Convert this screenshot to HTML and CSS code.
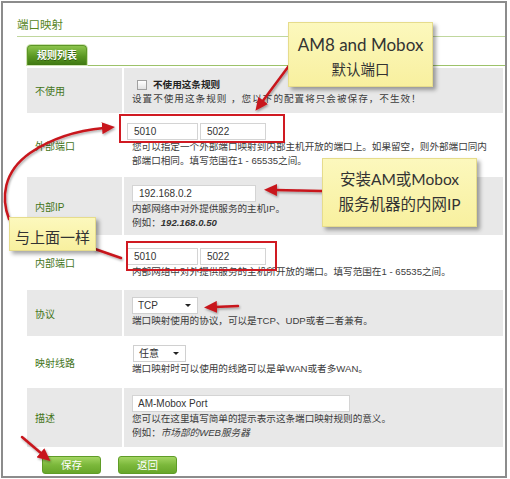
FILE: index.html
```html
<!DOCTYPE html>
<html lang="zh-CN">

<head>
    <meta charset="UTF-8">
    <meta name="viewport" content="width=device-width, initial-scale=1.0">
    <title>端口映射</title>
    <link rel="stylesheet" href="styles.css">
</head>

<body>
    <div class="page">
        <div class="frame">
            <h1 class="page-title">端口映射</h1>

            <div class="tabs">
                <span class="tab">规则列表</span>
            </div>

            <div class="rules">
                <div class="row shade row-enable">
                    <div class="label">不使用</div>
                    <div class="field">
                        <div class="check-line"><span class="check"></span><b>不使用这条规则</b></div>
                        <div class="help wide">设置不使用这条规则 ，您以下的配置将只会被保存，不生效！</div>
                    </div>
                </div>

                <div class="row row-ext">
                    <div class="label">外部端口</div>
                    <div class="field">
                        <div class="ports">
                            <input class="text port-from" type="text" value="5010">
                            <input class="text port-to" type="text" value="5022">
                        </div>
                        <div class="help">您可以指定一个外部端口映射到内部主机开放的端口上。如果留空，则外部端口同内<br>部端口相同。填写范围在1 - 65535之间。</div>
                    </div>
                </div>

                <div class="row shade row-ip">
                    <div class="label">内部IP</div>
                    <div class="field">
                        <input class="text ip" type="text" value="192.168.0.2">
                        <div class="help">内部网络中对外提供服务的主机IP。<br>例如：<b><i>192.168.0.50</i></b></div>
                    </div>
                </div>

                <div class="row row-int">
                    <div class="label">内部端口</div>
                    <div class="field">
                        <div class="ports">
                            <input class="text port-from" type="text" value="5010">
                            <input class="text port-to" type="text" value="5022">
                        </div>
                        <div class="help">内部网络中对外提供服务的主机所开放的端口。填写范围在1 - 65535之间。</div>
                    </div>
                </div>

                <div class="row shade row-proto">
                    <div class="label">协议</div>
                    <div class="field">
                        <span class="select proto">TCP<i class="caret"></i></span>
                        <div class="help">端口映射使用的协议，可以是TCP、UDP或者二者兼有。</div>
                    </div>
                </div>

                <div class="row row-line">
                    <div class="label">映射线路</div>
                    <div class="field">
                        <span class="select line">任意<i class="caret"></i></span>
                        <div class="help">端口映射时可以使用的线路可以是单WAN或者多WAN。</div>
                    </div>
                </div>

                <div class="row shade row-desc">
                    <div class="label">描述</div>
                    <div class="field">
                        <input class="text desc" type="text" value="AM-Mobox Port">
                        <div class="help">您可以在这里填写简单的提示表示这条端口映射规则的意义。<br>例如：<i>市场部的WEB服务器</i></div>
                    </div>
                </div>
            </div>

            <div class="actions">
                <button class="btn">保存</button>
                <button class="btn">返回</button>
            </div>
        </div>

        <!-- annotations drawn over the form -->
        <div class="mark mark-ext"></div>
        <div class="mark mark-int"></div>

        <svg class="arrows" width="510" height="479" viewBox="0 0 510 479">
            <defs>
                <marker id="head" markerUnits="userSpaceOnUse" markerWidth="14" markerHeight="12" refX="2" refY="6" orient="auto">
                    <path d="M0,0 L13,6 L0,12 z" fill="#c8161e" />
                </marker>
                <filter id="shade" x="-20%" y="-20%" width="140%" height="140%">
                    <feDropShadow dx="1" dy="1.5" stdDeviation="0.8" flood-color="#000" flood-opacity="0.35" />
                </filter>
            </defs>
            <g fill="none" stroke="#c8161e" stroke-width="2.5" stroke-linecap="round" filter="url(#shade)">
                <path d="M291 63 L262 102" marker-end="url(#head)" />
                <path d="M9 219 C1 198, 3 172, 30 153 C55 136, 82 130, 104 128" marker-end="url(#head)" />
                <path d="M95 249 L121 258" />
                <path d="M322 191 L275 190" marker-end="url(#head)" />
                <path d="M238 306 L215 307" marker-end="url(#head)" />
                <path d="M22 437 L42 454" marker-end="url(#head)" />
            </g>
        </svg>

        <div class="note note-ports">
            <div class="en">AM8 and Mobox</div>
            <div class="zh">默认端口</div>
        </div>
        <div class="note note-ip">
            <div>安装AM或Mobox</div>
            <div>服务机器的内网IP</div>
        </div>
        <div class="note note-same">与上面一样</div>
    </div>
</body>

</html>
```

FILE: styles.css
```css
body {
    margin: 0;
    font-family: 'Liberation Sans', 'Noto Sans CJK SC', sans-serif;
    color: #3c3c3c;
    background-color: #fff;
}

.page {
    position: relative;
    width: 510px;
    height: 479px;
    overflow: hidden;
}

.frame {
    margin: 1px;
    width: 502px;
    height: 473px;
    border: 2px solid #8c8c8c;
}

.page-title {
    margin: 0 0 0 14px;
    padding: 15px 0 4px;
    font-size: 11.5px;
    line-height: 14px;
    font-weight: normal;
    color: #57861f;
    border-bottom: 1px solid #c0d79d;
}

.tabs {
    display: flex;
    margin: 8px 0 0 24px;
    border-bottom: 1px solid #9dc26a;
}

.tab {
    width: 58px;
    height: 19px;
    line-height: 20px;
    text-align: center;
    font-size: 10px;
    font-weight: bold;
    color: #fff;
    border: 1px solid #5c9626;
    border-bottom: none;
    border-radius: 4px 4px 0 0;
    background: linear-gradient(#8cc44c, #5a9722 55%, #3f7812);
    box-shadow: 0 0 0 1px #cfe3b3;
    text-shadow: 0 1px 0 #2f5c0c;
}

.rules {
    display: flex;
    flex-direction: column;
    gap: 2px;
    margin: 2px 2px 0 24px;
}

.row {
    display: grid;
    grid-template-columns: 95px 1fr;
    column-gap: 2px;
}

.row.shade .label,
.row.shade .field {
    background-color: #e8e8e8;
}

.row-enable { height: 45px; }
.row-ext { height: 60px; }
.row-ip { height: 58px; }
.row-int { height: 51px; }
.row-proto { height: 46px; }
.row-line { height: 48px; }
.row-desc { height: 59px; }

.label {
    display: flex;
    align-items: center;
    padding-left: 8px;
    font-size: 10px;
    color: #44751a;
}

.field {
    padding: 8px 0 0 8px;
    font-size: 9.6px;
    line-height: 14px;
    white-space: nowrap;
}

.row-enable .field { padding-top: 10px; }
.row-int .field { padding-top: 11px; }
.row-proto .field,
.row-line .field,
.row-desc .field { padding-top: 7px; }

.check-line {
    display: flex;
    align-items: center;
}

.check-line b {
    color: #222;
}

.check {
    width: 8px;
    height: 8px;
    margin: 0 6px 0 5px;
    border: 1px solid #a0a0a0;
    background: linear-gradient(#fff, #e2e2e2);
}

.ports {
    display: flex;
    gap: 2px;
    margin-left: -5px;
}

.text {
    display: block;
    box-sizing: border-box;
    height: 17px;
    margin: 0;
    padding: 0 6px;
    border: 1px solid #d4d4d4;
    background-color: #fff;
    font-family: 'Liberation Sans', 'Noto Sans CJK SC', sans-serif;
    font-size: 10px;
    color: #333;
    outline: none;
}

.port-from { width: 71px; }
.port-to { width: 66px; }
.ip { width: 124px; }
.desc { width: 218px; padding-left: 5px; }

.select {
    display: flex;
    align-items: center;
    justify-content: space-between;
    box-sizing: border-box;
    height: 17px;
    padding: 0 6px 0 5px;
    border: 1px solid #d0d0d0;
    background-color: #fff;
    font-size: 10px;
    color: #333;
}

.select.proto { width: 66px; }
.select.line { width: 53px; margin-left: 1px; }

.caret {
    width: 0;
    height: 0;
    border-left: 3px solid transparent;
    border-right: 3px solid transparent;
    border-top: 3px solid #222;
}

.help {
    color: #3c3c3c;
}

.help.wide {
    letter-spacing: 1px;
}

.help b i {
    color: #333;
}

.actions {
    display: flex;
    gap: 17px;
    margin: 9px 0 0 39px;
}

.btn {
    width: 59px;
    height: 18px;
    padding: 0;
    border: 1px solid #5f9c27;
    border-radius: 3px;
    background: linear-gradient(#a3d562, #7bb83b 50%, #67a62a);
    color: #fff;
    font-family: 'Noto Sans CJK SC', sans-serif;
    font-size: 10.5px;
    line-height: 16px;
}

/* annotation layer */
.mark {
    position: absolute;
    box-sizing: border-box;
    border: 2px solid #d01a22;
}

.mark-ext {
    left: 119px;
    top: 114px;
    width: 166px;
    height: 29px;
}

.mark-int {
    left: 126px;
    top: 241px;
    width: 151px;
    height: 30px;
}

.arrows {
    position: absolute;
    left: 0;
    top: 0;
}

.note {
    position: absolute;
    box-sizing: border-box;
    text-align: center;
    color: #333;
    font-family: 'Lato', 'Noto Sans CJK SC', sans-serif;
    background: linear-gradient(#fcf8bd, #f8f09f);
    border: 1px solid #e6dc8c;
    box-shadow: 3px 3px 4px rgba(0, 0, 0, 0.35);
}

.note-ports {
    left: 288px;
    top: 22px;
    width: 145px;
    height: 65px;
    padding-top: 9px;
    font-size: 17px;
    line-height: 25px;
}

.note-ports .zh {
    font-size: 14.5px;
}

.note-ip {
    left: 322px;
    top: 158px;
    width: 155px;
    height: 69px;
    padding-top: 8px;
    font-size: 15.5px;
    line-height: 25px;
}

.note-same {
    left: 9px;
    top: 217px;
    width: 87px;
    height: 34px;
    padding-top: 5px;
    font-size: 15px;
    line-height: 28px;
}
```
